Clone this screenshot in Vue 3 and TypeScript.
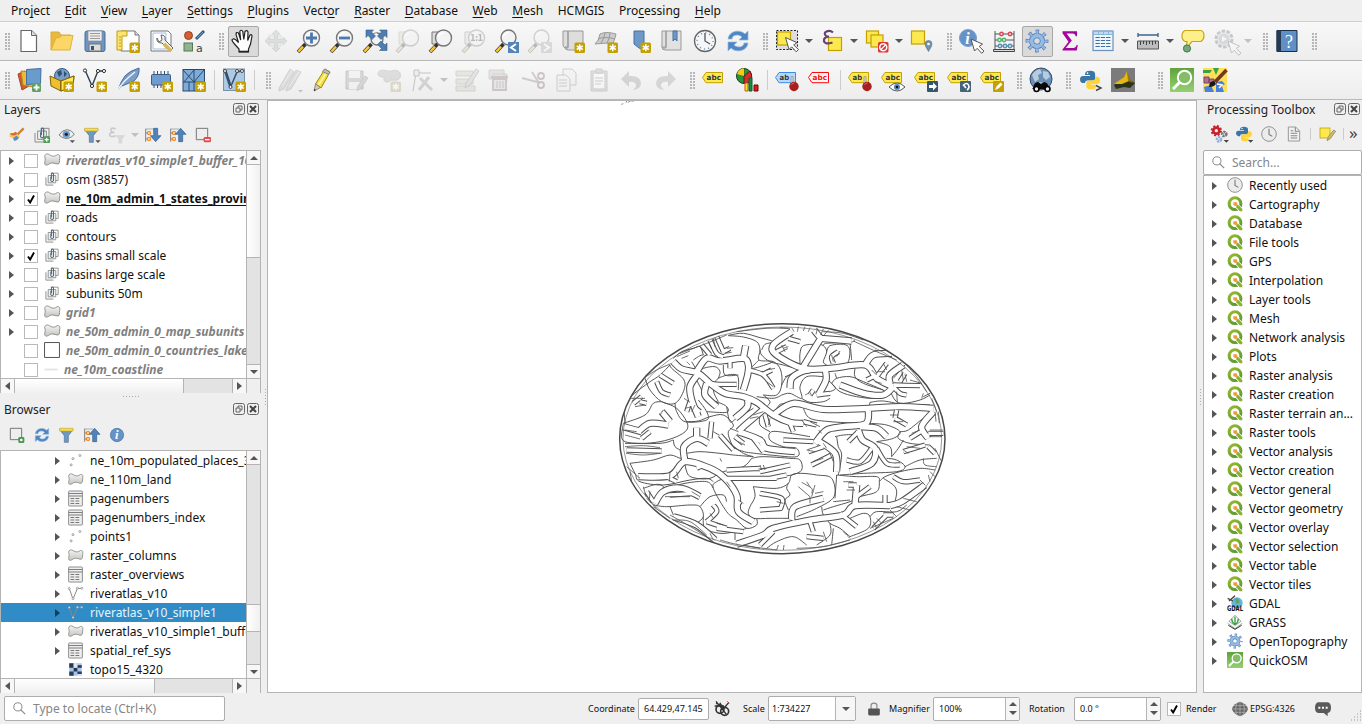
<script setup lang="ts">
type Item = { t: 'btn' | 'handle' | 'sep' | 'arrow' | 'space'; icon?: string; off?: boolean; on?: boolean; drop?: boolean }
type Row = { label: string; icon: string; arrow?: boolean; checked?: boolean; style?: string; selected?: boolean }

const badge =
  '<rect x="13.5" y="13.5" width="10.5" height="10.5" rx="1.5" fill="#c4a000"/><path d="M18.75 15.2v7.1M15.7 17l6.1 3.5M15.7 20.5l6.1-3.5" stroke="#fff" stroke-width="1.5"/>'
const lens =
  '<path d="M1 23l7.5-8" stroke="#333" stroke-width="3.6"/><path d="M1.4 22.6l4.6-5" stroke="#f5c832" stroke-width="2.4"/>'
const glass = (x = 14.5, y = 9, r = 8) =>
  `${lens}<circle cx="${x}" cy="${y}" r="${r}" fill="#f3f3f3" stroke="#777" stroke-width="1.4"/><path d="M${x - 5} ${y - 1}q1-4 5-4" fill="none" stroke="#fff" stroke-width="1.5"/>`
const tag = (fill: string, line: string, color: string, word: string) =>
  `<path d="M.5 9.5L4 4.5H20.5V14.7H4Z" fill="${fill}" stroke="${line}"/><text x="4.6" y="12.3" font-family="DejaVu Sans" font-weight="bold" font-size="7.4" textLength="${word.length * 4.8}" lengthAdjust="spacingAndGlyphs" fill="${color}">${word}</text>`
const yTag = (w = 'abc') => tag('#fce94f', '#c4a000', '#333', w)
const pin = '<path d="M17 8.500v8" stroke="#777" stroke-width="2.600"/><path d="M17 9v8" stroke="#ddd" stroke-width="1.4"/><circle cx="19" cy="18.500" r="4.7" fill="#a61e1e"/><path d="M16.500 17q1-2.500 3-2" stroke="#d66" fill="none"/>'
const refreshArt = '<path d="M2 10C3 1.500 14 0 19 5l3-3v9h-9l3-3C12 4.500 6 6 6 10Z" fill="#4f87c4" stroke="#8fb4dd" stroke-width=".7"/><path d="M22 14C21 22.500 10 24 5 19l-3 3v-9h9l-3 3c4 3.500 10 2 10-2Z" fill="#4f87c4" stroke="#8fb4dd" stroke-width=".7"/>'
const pythonArt = '<path d="M6 5q0-4 6-4t6 4v5q0 2.500-3 2.500H9Q6 12.500 6 15.500H3.500Q0 15 0 11t4-4h8V6H6Z" fill="#3a75a8"/><circle cx="9" cy="3.700" r="1" fill="#fff"/><path d="M18 8h3q3 1 3 4.500T20 17h-7v1h6v1.500q0 3.500-5.500 3.500T7.500 19.500V15q0-2.500 3-2.500H15q3 0 3-3Z" fill="#ffd43b"/>'
const layersClip = '<path d="M1.500 9v13.500h13M5.500 6v12.500h13V6Z" fill="#f1f1ee" stroke="#8a8a86" stroke-width="1.500"/><path d="M10 2h12.500v12.500H18" fill="none" stroke="#8a8a86" stroke-width="1.500"/><path d="M10 8v7q2 2.500 4.500 0V3q-2-2.500-3.500 0v9" fill="none" stroke="#45688e" stroke-width="1.800"/>'
const polygonArt = '<defs><linearGradient id="pg" x2="0" y2="1"><stop stop-color="#f4f4f2"/><stop offset="1" stop-color="#c4c4c1"/></linearGradient></defs><path d="M1 7C1 3 5 2 8 4C12 7 16 7 20 4C24 3 24 7 23.500 10C23 14 24 17 21 18C17 18 13 15 9 17C6 20 1 21 1 17C1 14 3 11 1 7Z" fill="url(#pg)" stroke="#92928f" stroke-width="1.500"/>'
const gearArt = '<g fill="none"><circle cx="12" cy="12" r="9.300" stroke="#4d7fbd" stroke-width="4.200" stroke-dasharray="3.300 4.005" stroke-dashoffset="1.600"/><circle cx="12" cy="12" r="5.400" stroke="#4d7fbd" stroke-width="5.200"/><circle cx="12" cy="12" r="9" stroke="#98bbe4" stroke-width="3.400" stroke-dasharray="2 5.069" stroke-dashoffset="1"/><circle cx="12" cy="12" r="5.400" stroke="#98bbe4" stroke-width="3.600"/></g>'
const sortArt = '<path d="M1 3v19M1 9h5M1 18h5" stroke="#777" stroke-width="1.400"/><path d="M4 7h4v4H4zM4 16h4v4H4z" fill="#fff0d0" stroke="#f57900" stroke-width="1.500"/><path d="M0 3h14" stroke="#888"/>'
const quickArt = '<defs><linearGradient id="qg" x2="0" y2="1"><stop stop-color="#5ea33b"/><stop offset="1" stop-color="#97cf74"/></linearGradient></defs><path d="M0 0h24v24H0z" fill="url(#qg)"/><circle cx="14.500" cy="9.500" r="6.700" fill="#85bc68" stroke="#fff" stroke-width="2"/><path d="M10 14l-7 7" stroke="#fff" stroke-width="3"/>'
const globeArt = '<circle cx="12" cy="11" r="11" fill="#6b8fb5" stroke="#334c68"/><path d="M3 7q3-5 8-6l2 4-4 2 1 4-4 3zM14 3l5 1 2 5-4 3-3-3zM10 14l6 1-2 5" fill="#b8cce0"/>'
const cross = '<path d="M12 1l4 4h-2.500v5.500H19V8l4 4-4 4v-2.500h-5.500V19H16l-4 4-4-4h2.500v-5.500H5V16l-4-4 4-4v2.500h5.500V5H8Z" fill="#9db3c9" stroke="#6f879e" stroke-width=".7"/>'
const sq = (x: number, y: number, s: number) => `<rect x="${x}" y="${y}" width="${s}" height="${s}" fill="#fce94f" stroke="#c4a000" stroke-width="1.200"/>`
const cursor = (x: number, y: number) => `<path transform="translate(${x} ${y})" d="M0 0l3.500 12 2.700-2.700 4.500 5 2.300-2.200-4.800-4.700 3.300-2.300Z" fill="#fff" stroke="#555"/>`
const paper = '<path d="M4 1.500h10.500l5 5V22.500H4Z" fill="#fff" stroke="#666" stroke-width="1.200"/><path d="M14.500 1.500v5h5" fill="#ddd" stroke="#666"/>'

const art: Record<string, string> = {
  doc: paper,
  open: '<path d="M1 21V3h8l2 3h10v4" fill="#e8b93c" stroke="#dcae38"/><path d="M1 21l5-12q4 0 6-2.500h11L20 21Z" fill="#fcd667" stroke="#e0b13b"/>',
  save: '<rect x="2" y="2" width="20" height="20.500" rx="2" fill="#6d96c4" stroke="#466d9b"/><path d="M5 2h14v10H5z" fill="#eee" stroke="#888" stroke-width=".7"/><path d="M7 4.500h10M7 7h10M7 9.500h10" stroke="#999"/><path d="M6 15h12v7H6z" fill="#ddd" stroke="#777"/><path d="M8 17h3v4H8z" fill="#35557d"/>',
  layout: '<path d="M5 2h14l4 4v16H5z" fill="#fff" stroke="#777"/><path d="M19 2v4h4" fill="#ddd" stroke="#777"/><path d="M1 2h10v5H6v14H1z" fill="#fce374" stroke="#c4a000"/><path d="M3 8h2M3 11h2M3 14h2M3 17h2" stroke="#c4a000"/>' + badge,
  manager: '<path d="M2 2h17l3 3v17H2z" fill="#fff" stroke="#777"/><path d="M4 4h13v16H4z" fill="none" stroke="#a7bee0"/><path d="M8 9q-1 5 5 5l8 8 3-3-8-8q1-5-4-5l1 5-3 2Z" fill="#eee" stroke="#666"/><path d="M15 15l7 7" stroke="#d7b65d" stroke-width="3.500"/>',
  style: '<circle cx="6.500" cy="6.500" r="4" fill="#d45f34" stroke="#98401e"/><path d="M14 10l8-8" stroke="#35587e" stroke-width="3"/><path d="M15 9l6-6" stroke="#7da3cc"/><rect x="2" y="14" width="8.500" height="8" fill="#8fb58e" stroke="#537a54"/><text x="14" y="22.500" font-family="DejaVu Sans" font-size="11" fill="#444">a</text>',
  hand: '<path d="M8 23v-3L3.500 15Q-.5 10.500 2 10q2-.5 5.500 3.500L5 5.500q0-3 2.500-1.500l2.200 7L8.800 2.500q1-2.500 3 0l1 8 1.200-8q2-2 3 .5l-.3 8.500 2.300-5.500q2-1 2 1L19.500 15 17.500 20v3Z" fill="#fff" stroke="#222" stroke-width="1.200"/><path d="M8 22.500h9.500" stroke="#222" stroke-width="1.600"/>',
  pansel: '<path d="M5 6h12v11H5z" fill="#e9dc83" stroke="#c6bb72"/>' + cross,
  zin: glass() + '<path d="M14.500 3.500v11M9 9h11" stroke="#4c78ad" stroke-width="2.800"/>',
  zout: glass() + '<path d="M9 9h11" stroke="#4c78ad" stroke-width="2.800"/>',
  zfull: glass(14, 10, 6) + '<path d="M3 1h7.500L8.500 3l4 4-3.500 3.500-4-4L3 8.500zM24 1h-7.500l2 2-4 4 3.500 3.500 4-4 2 2zM24 21.500h-7.500l2-2-4-4L18 12l4 4 2-2z" fill="#4e7daf" stroke="#365e8a" stroke-width=".6"/>',
  zsel: '<path d="M3 3h11v12H3z" fill="#e9dc83" stroke="#aaa064"/>' + glass(),
  zlayer: '<path d="M3 3h11v12H3z" fill="#ddd" stroke="#777"/>' + glass(),
  z11: '<path d="M3 3h11v12H3z" fill="#ddd" stroke="#777"/>' + glass() + '<text x="8" y="12" font-family="DejaVu Sans" font-weight="bold" font-size="8" fill="#333" textLength="13">1:1</text>',
  zlast: glass(13.5, 8.5, 7.5) + '<path d="M13 13h11v11H13z" fill="#5383b9"/><path d="M21 15l-5 3.500 5 3.500" fill="none" stroke="#fff" stroke-width="2"/>',
  znext: glass(13.5, 8.5, 7.5) + '<path d="M13 13h11v11H13z" fill="#8aa"/><path d="M16 15l5 3.500-5 3.500" fill="none" stroke="#fff" stroke-width="2"/>',
  newmap: '<path d="M2 2h5v17H4q-2-1-2-3zM7 2h15v19H7q-3 0-3-3h3z" fill="#ddd" stroke="#999"/>' + badge,
  view3d: '<path d="M1 15Q5 12 6 5q6-3 16 0-1 5-3 9-9 0-18 1Z" fill="#ccc" stroke="#999"/><path d="M4 10q7-3 17 0M11 4Q10 10 7 14M16 4q0 5-3 10" fill="none" stroke="#999"/>' + badge,
  bmnew: '<path d="M7 2h10v19l-5-2-5-4z" fill="#6e98c8" stroke="#46709f"/>' + badge,
  bmshow: '<path d="M2 2h4v17H3q-2-1-1-3zM6 2h15v19H5q-3 0-3-3h4z" fill="#e1e1e1" stroke="#999"/><path d="M13 2h4v10l-2-2-2 2z" fill="#6e98c8" stroke="#46709f"/>',
  clock: '<circle cx="12" cy="12" r="10.500" fill="#f5f6f7" stroke="#666" stroke-width="1.300"/><circle cx="12" cy="12" r="8" fill="none" stroke="#6f91b4" stroke-width="1.600" stroke-dasharray="1 3.189"/><path d="M12 4v8l5 3" fill="none" stroke="#555" stroke-width="1.300"/>',
  refresh: refreshArt,
  select: '<rect x="1.500" y="1.500" width="21" height="19" fill="#ddd" stroke="#222" stroke-dasharray="2 1.500"/>' + sq(2.5, 3, 13) + cursor(10.5, 8.5),
  selexp: sq(8.5, 8.5, 13) + '<path d="M13 3.500Q10 1 6.500 2.500T6.500 7.500L9 7.500Q3.500 8 4 12t8.500 1.500" fill="none" stroke="#674172" stroke-width="2.200"/>',
  desel: sq(1.5, 2, 12) + sq(6, 6, 12) + '<rect x="13" y="13" width="10.500" height="10.500" rx="1.500" fill="#e03434"/><circle cx="18.250" cy="18.250" r="3.500" fill="none" stroke="#fff" stroke-width="1.500"/><path d="M15.500 21l5.500-5.500" stroke="#fff" stroke-width="1.300"/>',
  selloc: sq(1.5, 2, 13) + '<path d="M18.500 22.500Q15 17 15 15a3.500 3.500 0 017 0q0 2-3.500 7.500Z" fill="#7392ac" stroke="#51738f" stroke-width=".6"/><circle cx="18.500" cy="15" r="1.300" fill="#fff"/>',
  info: '<circle cx="9" cy="9" r="8.500" fill="#6593c7" stroke="#779fcb"/><text x="6.300" y="14.500" font-family="Liberation Serif" font-weight="bold" font-style="italic" font-size="16" fill="#fff">i</text>' + cursor(12, 10),
  abacus: '<path d="M3 2v19M22 2v19M3 5h19M3 11h19M3 17h19" stroke="#555"/><path d="M1.500 20.500h21v2h-21z" fill="#ddd" stroke="#444"/><g fill="#eee" stroke-width="1.500"><g stroke="#d64550"><circle cx="9.500" cy="5" r="1.700"/><circle cx="18" cy="5" r="1.700"/></g><g stroke="#56b56b"><circle cx="7.500" cy="11" r="1.700"/><circle cx="12" cy="11" r="1.700"/></g><g stroke="#5591b9"><circle cx="8" cy="17" r="1.700"/><circle cx="13" cy="17" r="1.700"/><circle cx="18" cy="17" r="1.700"/></g></g>',
  gear: gearArt,
  sigma: '<path d="M4.500 3v-.8h14.500v5h-1.300q-.5-2.700-3.200-2.700H8.500l5.300 7L7.700 19h7.500q2.500 0 3.500-3h1.100l-1 5.500H4.500v-1L10.500 12.700 4.500 4.200Z" fill="#a3069c"/>',
  table: '<rect x="2" y="2" width="20" height="19.500" fill="#f0f5fb" stroke="#6991bd" stroke-width="1.200"/><path d="M2 2h20v4H2z" fill="#86b6dc"/><path d="M3 4h18" stroke="#fff" stroke-dasharray="4 1"/><path d="M4.500 8.500h15M4.500 11.500h15M4.500 14.500h15M4.500 17.500h15" stroke="#3c6fa5" stroke-width="1.200" stroke-dasharray="4.300 1"/>',
  measure: '<path d="M2 6h20M2 4v4M22 4v4" stroke="#3d6690" stroke-width="1.400"/><path d="M1.500 12h21v8h-21z" fill="#bdbdbd" stroke="#555"/><path d="M4.500 12v4M7.500 12v3M10.500 12v4M13.500 12v3M16.500 12v4M19.500 12v3" stroke="#444"/>',
  tip: '<path d="M4 1.500h16q3 1 3 5t-3 6H11l-6 7 1-7H4Q1 11 1 7t3-5.500Z" fill="#fdf08a" stroke="#c6a51c" stroke-width="1.200"/><circle cx="6" cy="19.500" r="3.600" fill="#73a87c" stroke="#46744d"/>',
  action: '<circle cx="10" cy="10" r="8" fill="#ddd" stroke="#666" stroke-width="3" stroke-dasharray="3.500 1.500"/><circle cx="10" cy="10" r="5.500" fill="#88a5bd"/><path d="M8 7l5 3-5 3z" fill="#fff"/>' + cursor(14, 12),
  help: '<path d="M2 1.500h20v21H2z" fill="#5f8fc4" stroke="#182f4a"/><path d="M1.500 1.500h4.500v21H1.500z" fill="#263a53"/><text x="10" y="18.500" font-family="Liberation Serif" font-size="18" fill="#fff">?</text>',
  data: '<path d="M1 6l7-3 4 15-7 4z" fill="#cf5d32" stroke="#a34621"/><path d="M4 3l12 1 1 15-11-2z" fill="#f0bb31" stroke="#b88918"/><path d="M9.500 1.500L24 .5l-.5 15-14 1z" fill="#699bcb" stroke="#42709f"/><rect x="15" y="15" width="9" height="9" rx="1.500" fill="#629f68"/><path d="M19.500 16.500v6M16.500 19.500h6" stroke="#fff" stroke-width="1.800"/>',
  geopkg: '<circle cx="12" cy="8" r="7.500" fill="#769dc8" stroke="#335c88"/><path d="M7 4l4-2 1 4-3 3zM14 3l3 3-3 3z" fill="#324f70"/><path d="M0 8l11 5v10L1 18zM24 8l-13 5v10l12-5z" fill="#efbf30" stroke="#816000"/><path d="M24 8l-13 5v10l12-5z" fill="#ffe85a" stroke="#816000"/>' + badge,
  vector: '<path d="M2 2l7 16 6-15h6" fill="none" stroke="#263e57" stroke-width="1.400"/><g fill="#fff" stroke="#333"><circle cx="2" cy="2.500" r="1.600"/><circle cx="9" cy="18" r="1.600"/><circle cx="15" cy="3" r="1.600"/><circle cx="21" cy="3" r="1.600"/></g>' + badge,
  feather: '<path d="M2 22Q5 13 9 8T23 0Q24 7 18 13L6 18" fill="#7a9ec8" stroke="#426d9e"/><path d="M1 23Q6 14 19 4" fill="none" stroke="#edf5fc" stroke-width="1.500"/>' + badge,
  chip: '<path d="M5 3v17M8.500 3v17M12 3v17M15.500 3v17M19 3v17" stroke="#36516e"/><rect x="2.500" y="6.500" width="19" height="10.500" rx="1" fill="#6f9bd0" stroke="#345d89"/>' + badge,
  mesh: '<rect x="1" y="1.500" width="21.500" height="21.500" fill="#7fabd9" stroke="#284a6e"/><path d="M1 14h21M12 1v22M1 2l11 12L22 2M12 2L2 14M7 14v9" fill="none" stroke="#284a6e"/>' + badge,
  virtual: '<rect x="1.500" y="1" width="21" height="21.500" fill="#aec9e3" stroke="#7790aa"/><path d="M4 3l5 15 6-14 5-1M3 4l5 15" fill="none" stroke="#35506b" stroke-width="1.500"/><g fill="#fff" stroke="#444"><circle cx="3" cy="3" r="1.500"/><circle cx="8.500" cy="19" r="1.500"/><circle cx="15" cy="3" r="1.500"/><circle cx="20" cy="3" r="1.500"/></g>' + badge,
  pencils: '<path d="M1 20L12 1l4 3L6 21l-5 2zM8 21L18 2l5 2-10 17-5 2z" fill="#b3aaa4" stroke="#8b8580"/><path d="M4 18L14 3M11 19L21 4" stroke="#ddd"/><path d="M20 22h5l-2.500 2.500z" fill="#555"/>',
  pencil: '<path d="M4.500 16L14 1l5 3L10 20Z" fill="#f3dd48" stroke="#9d8900"/><path d="M7.500 17L16.500 3" stroke="#fff89a" stroke-width="1.500"/><path d="M13.500 1l5.500 3-1.500 2.500-6-3z" fill="#bbb" stroke="#888"/><path d="M4.500 16L3 23l6.500-3.500z" fill="#dfc9a4" stroke="#777" stroke-width=".8"/><path d="M3.300 21L3 23l2-1z" fill="#222"/>',
  saveedit: '<path d="M2 3h17v18H2z" fill="#999" stroke="#666"/><path d="M5 3h11v7H5zM5 14h11v7H5z" fill="#eee"/><path d="M13 23l1-5 7-10 3 2-7 10z" fill="#b59090" stroke="#777"/>',
  addpoly: '<path d="M1 6C1 1 8 2 11 3S17 1 21 3 24 11 20 12 15 11 13 13 6 14 7 11 1 10 1 6Z" fill="#aaa" stroke="#888"/>' + badge,
  vertex: '<path d="M3 23L6 5h15" fill="none" stroke="#555"/><path d="M4 2h5v6H4z" fill="#ddd" stroke="#555"/><path d="M9 22l10-13M10 10l12 12" stroke="#888" stroke-width="3"/>',
  multi: '<path d="M1 3h17v5H1zM1 11h17v5H1zM1 18h19v5H1z" fill="#cbc69e" stroke="#918c65"/><path d="M10 20l1-5L21 1l3 2-9 14z" fill="#bbb" stroke="#777"/>',
  del: '<path d="M1 2h15v9H1zM5 6h14v8H5z" fill="#c5bea7" stroke="#888"/><path d="M3 9h17M5 11h13v11H5z" fill="#ccc" stroke="#a15b5b" stroke-width="1.800"/><path d="M9 13v7M12 13v7M15 13v7" stroke="#a15b5b"/>',
  cut: '<path d="M1 10l17 4.500M11 4l7 11" stroke="#777" stroke-width="2"/><circle cx="20" cy="8" r="3" fill="none" stroke="#9d4b4b" stroke-width="1.800"/><circle cx="20" cy="17" r="3" fill="none" stroke="#9d4b4b" stroke-width="1.800"/>',
  copy: '<path d="M9 1h9l4 4v12H9z" fill="#eee" stroke="#777"/><path d="M3 7h9l4 4v12H3z" fill="#eee" stroke="#777"/><path d="M5 12h8M5 15h8M5 18h8" stroke="#777"/>',
  paste: '<path d="M4 3h16v20H4z" fill="#bcbcb0" stroke="#777"/><path d="M6 5h12v16H6z" fill="#fff" stroke="#777"/><path d="M9 1h6v4H9z" fill="#aaa" stroke="#777"/><path d="M8 10h8M8 13h8M8 16h6" stroke="#777"/>',
  undo: '<path d="M9 3v5q11-1 12 7 0 6-8 7 5-4 2-7-2-2-6-1v5L1 11z" fill="#9d8888"/>',
  redo: '<path d="M15 3v5Q4 7 3 15q0 6 8 7-5-4-2-7 2-2 6-1v5l8-8z" fill="#8d9691"/>',
  tagY: yTag(),
  chart: '<circle cx="9" cy="8" r="7.500" fill="#23963d" stroke="#183f1d"/><path d="M9 8V.5A7.500 7.500 0 003 3.500Z" fill="#f2cc18" stroke="#5d5013"/><path d="M9 8V.5Q4 .5 2 6Z" fill="#f2cc18"/><path d="M9 8l6-5q4 7-1 11.500L9 15.500z" fill="#d92b2b" stroke="#6a1717"/><path d="M10 15h3v8h-3z" fill="#fce02a" stroke="#d05b00"/><path d="M14 10h3v13h-3z" fill="#198a43" stroke="#09602c"/><path d="M19 17h4v6h-4z" fill="#d71d1d" stroke="#750505"/>',
  tagB: tag('#b8d9fa', '#3c8be8', '#333', 'ab') + pin,
  tagR: tag('#fff4f4', '#fa0c0c', '#fa0c0c', 'abc'),
  tagPin: yTag('ab') + pin,
  tagEye: yTag() + '<path d="M8 19q8-8 16 0-8 8-16 0Z" fill="#fff" stroke="#555"/><circle cx="16" cy="19" r="3" fill="#4888bd"/><circle cx="16" cy="19" r="1.200" fill="#111"/>',
  tagMove: yTag() + '<rect x="13" y="13" width="11" height="11" rx="1" fill="#35576d"/><path d="M15 17h4v-2.500l4 4-4 4V20h-4z" fill="#fff"/>',
  tagRot: yTag() + '<rect x="13" y="13" width="11" height="11" rx="1" fill="#456478"/><path d="M20 22q3-2 1.500-5t-5 0l2.500 3" fill="none" stroke="#fff" stroke-width="1.600"/>',
  tagEdit: yTag() + '<rect x="13" y="13" width="11" height="11" rx="1" fill="#c4a000"/><path d="M15 22l1.500-3.500 4-4 2 2-4 4z" fill="#fff"/>',
  globe: globeArt + '<path d="M4 20q1-6 5-6l3 2 3-2q4 0 5 6l1 1H3z" fill="#090909"/><circle cx="7.500" cy="21" r="2.500" fill="#eee" stroke="#000" stroke-width="1.600"/><circle cx="18.500" cy="21" r="2.500" fill="#eee" stroke="#000" stroke-width="1.600"/>',
  python: '<g transform="translate(2 2) scale(.84)">' + pythonArt + '</g><path d="M18 17.500l5 2.500-5 2.500" fill="none" stroke="#444" stroke-width="1.400"/>',
  pyDrop: pythonArt + '<path d="M18 21h8l-4 4z" fill="#444"/>',
  plane: '<path d="M0 0h24v24H0z" fill="#7b7b7b"/><path d="M3 17L13 9l3-5 3 8 5 3-5 5-6-1-8 2z" fill="#2b3418"/><path d="M3 16l10-7 3-6 2 10-7 3z" fill="#e5b715"/><path d="M16 3l3 9 4 3-6-2z" fill="#a97a00"/>',
  quick: quickArt,
  paint: '<path d="M0 0h24v24H0z" fill="#ffe05b"/><path d="M0 2h9l-2 3H0zM10 0l3 7 3-7z" fill="#3ca044"/><path d="M1 9h5v6H1zM6 11h5v4H6z" fill="#b46d8d" stroke="#784766"/><path d="M1 19l7-2 3 7H2zM13 24V14l6-1 3 3-3 2 2 6z" fill="#4a80da"/><path d="M14 16l5 1-3 3M6 18l4-2" stroke="#fff" stroke-width="1.500" fill="none"/><path d="M12 14L23.500 2" stroke="#74381a" stroke-width="3.600"/><path d="M6 19q0-6 5-6l2 3q-2 3-7 3" fill="#181818"/>',
  brush: '<path d="M11 13L22 2" stroke="#c88637" stroke-width="3.500"/><path d="M1 9q5 1 8-2l7 7q-3 6-7 6Q5 15 1 15z" fill="#f4cb50"/><path d="M2 9q5 1 8-2l3 3q-5 4-10 2z" fill="#e75c44"/><path d="M6 17l5-4 4 3q-3 5-7 5z" fill="#5a8cc6"/>',
  addgroup: layersClip + '<rect x="14" y="14" width="10" height="10" rx="1" fill="#4e9d57"/><path d="M19 16v6M16 19h6" stroke="#fff" stroke-width="2"/>',
  eye: '<path d="M0 12Q5 4 12 4t11 7q-9 10-19 4Z" fill="#eee" stroke="#777" stroke-width="1.400"/><circle cx="11" cy="11" r="5.500" fill="#6d9fce"/><circle cx="11" cy="11" r="2.500" fill="#222"/><path d="M16 20h8l-4 4z" fill="#555"/>',
  filter: '<path d="M1 4h20l-7 9v10H8V13z" fill="#7198c1" stroke="#4d719a"/><path d="M1 2h20v4H1z" fill="#f5e34c" stroke="#c6a42c"/>',
  filterD: '<path d="M1 4h20l-7 9v10H8V13z" fill="#7198c1" stroke="#4d719a"/><path d="M1 2h20v4H1z" fill="#f5e34c" stroke="#c6a42c"/><path d="M17 20h8l-4 4z" fill="#555"/>',
  epsF: '<path d="M10 3Q3 0 3 4t5 4Q0 8 1 12t9 1" fill="none" stroke="#777" stroke-width="2.500"/><path d="M11 13h12l-4 5v6h-4v-6z" fill="#aaa" stroke="#888"/>',
  expand: sortArt + '<path d="M13 2h6v11h5l-8 9-8-9h5z" fill="#5182b8" stroke="#2f5f92"/>',
  collapse: sortArt + '<path d="M13 22h6V11h5l-8-9-8 9h5z" fill="#5182b8" stroke="#2f5f92"/>',
  remove: '<path d="M2 2h17v17H2z" fill="#eee" stroke="#777" stroke-width="1.500"/><rect x="13" y="15" width="11" height="8" rx="2" fill="#e64b4b"/><path d="M15 19h7" stroke="#fff" stroke-width="2"/>',
  addlayer: '<path d="M2 2h17v17H2z" fill="#eee" stroke="#777" stroke-width="1.500"/><rect x="14" y="15" width="9" height="9" rx="2" fill="#4e9557"/><circle cx="18.500" cy="19.500" r="2" fill="#fff"/>',
  infoS: '<circle cx="12" cy="12" r="10" fill="#6593c7" stroke="#40709f"/><text x="9" y="18.500" font-family="Liberation Serif" font-weight="bold" font-style="italic" font-size="19" fill="#fff">i</text>',
  gearsRed: '<circle cx="8" cy="7" r="4.500" fill="none" stroke="#c8232c" stroke-width="4"/><circle cx="8" cy="7" r="7" fill="none" stroke="#c8232c" stroke-width="3" stroke-dasharray="3 2.500"/><circle cx="20" cy="12" r="3" fill="none" stroke="#777" stroke-width="4" stroke-dasharray="2.800 1"/><circle cx="12" cy="20" r="3" fill="none" stroke="#8fb0dd" stroke-width="4" stroke-dasharray="2.800 1"/><path d="M19 21h8l-4 4z" fill="#444"/>',
  clockS: '<circle cx="12" cy="12" r="11" fill="#ececec" stroke="#8b8b8b" stroke-width="1.400"/><path d="M12 4v8.500l5 3" fill="none" stroke="#777" stroke-width="1.600"/>',
  docS: '<path d="M3.500 1.500h11l6 6v15h-17Z" fill="#f1f1f1" stroke="#999" stroke-width="1.500"/><path d="M14 2v6h6M7 11h10M7 14.500h10M7 18h10M7 7h4" fill="none" stroke="#888" stroke-width="1.600"/>',
  edit: sq(1.5, 3, 15) + '<path d="M12 22l2-6 8-10 3 2-8 11z" fill="#d5bb55" stroke="#777"/>',
  poly: polygonArt,
  group: layersClip,
  sheet: '<rect x="1" y="0" width="22" height="24" rx="1" fill="#eee" stroke="#888" stroke-width="1.500"/><path d="M1 4h22M1 8h22" stroke="#777" stroke-width="1.500"/><path d="M4 12h16M4 16h16M4 20h16" stroke="#777" stroke-width="1.700" stroke-dasharray="6 2"/>',
  points: '<g fill="none" stroke="#999" stroke-width="1.500"><circle cx="5" cy="19" r="1.600"/><circle cx="8" cy="9" r="1.600"/><circle cx="19" cy="4" r="1.600"/></g>',
  line: '<path d="M2 4l6 17 7-17h7" fill="none" stroke="#888" stroke-width="1.600"/><g fill="#eee" stroke="#888"><circle cx="2" cy="4" r="1.700"/><circle cx="8" cy="20" r="1.700"/><circle cx="15" cy="3.500" r="1.700"/><circle cx="22" cy="3.500" r="1.700"/></g>',
  raster: '<path d="M2 2h20v20H2z" fill="#a9c4e8"/><path d="M2 2h7v7H2zM9 9h6v6H9zM15 5h7v4h-7z" fill="#26374f"/><path d="M2 15h7v7H2zM15 15h7v4h-7z" fill="#263f5f"/><path d="M9 2h6v7H9zM15 19h7v3h-7z" fill="#dbe7f5"/>',
  box: '<path d="M.8.8h22.400v22.400H.8z" fill="#fff" stroke="#555" stroke-width="1.500"/>',
  dash: '<path d="M0 12h21" stroke="#e4e4e4" stroke-width="3"/>',
  qgis: '<defs><linearGradient id="qr" x2=".6" y2="1"><stop stop-color="#9cb92b"/><stop offset="1" stop-color="#5b9a35"/></linearGradient></defs><circle cx="12" cy="11.500" r="8.800" fill="#fff" stroke="url(#qr)" stroke-width="4.600"/><path d="M12 12l11 11" stroke="#fff" stroke-width="7"/><path d="M14 14l3-.5 6 6V23h-4l-5-6Z" fill="#8bb02f"/><path d="M9.500 9.500h5l1.500 3.500-3 2.500-3.500-2Z" fill="#f39a3c"/>',
  gdal: '<circle cx="15" cy="12" r="8.500" fill="#62b6d9"/><path d="M12 5l5 1 2 5-5 3z" fill="#64a65d"/><path d="M1 5l8 4M3 9L12 1" stroke="#444" stroke-width="2"/><text x="0" y="23.500" font-family="DejaVu Sans" font-weight="bold" font-size="11.500" textLength="24" lengthAdjust="spacingAndGlyphs" fill="#111">GDAL</text>',
  grass: '<path d="M1 14l11 8 11-8M3 11l9 6 9-6-9-9z" fill="#f7f7f7" stroke="#888" stroke-width="1.200"/><path d="M12 16V4M12 16Q7 12 7 7M12 16q5-4 5-9" fill="none" stroke="#35a540" stroke-width="2"/><path d="M2 17l10 6 10-6" fill="none" stroke="#333" stroke-width="1.500"/>',
  target: '<circle cx="9" cy="14" r="6" fill="#eee" stroke="#333" stroke-width="2.500"/><circle cx="16" cy="17" r="6" fill="none" stroke="#333" stroke-width="2.500"/><path d="M3 2l16 20M9 4l5 12M1 9h14M15 12l7-8M3 5l9 3" fill="none" stroke="#333" stroke-width="2"/><path d="M20 2l3 3" stroke="#a44" stroke-width="1.500"/>',
  lock: '<path d="M7 12V6q0-4 5-4t5 4v6" fill="none" stroke="#888" stroke-width="2"/><rect x="2" y="11" width="20" height="12" rx="2" fill="#555"/>',
  crs: '<path d="M12 1Q22 4 24 12 22 20 12 23 2 20 0 12 2 4 12 1Z" fill="#666"/><path d="M1 12h22M3 7h18M3 17h18M12 1v22M8 2q-5 10 0 20M16 2q5 10 0 20" fill="none" stroke="#ccc" stroke-width=".8"/>',
  bubble: '<path d="M5 2h14q5 1 5 8t-5 8v5l-6-5H5q-5-1-5-8t5-8Z" fill="#5a5a5a"/><path d="M5 10h3M10.500 10h3M16 10h3" stroke="#fff" stroke-width="3"/>',
  search: '<circle cx="9" cy="9" r="7.500" fill="none" stroke="#888" stroke-width="1.800"/><path d="M14 14l8.500 8.500" stroke="#888" stroke-width="2.200"/>',
}

const menus: [string, string, string][] = [
  ['Pro', 'j', 'ect'], ['', 'E', 'dit'], ['', 'V', 'iew'], ['', 'L', 'ayer'], ['', 'S', 'ettings'], ['', 'P', 'lugins'], ['Vect', 'o', 'r'],
  ['', 'R', 'aster'], ['', 'D', 'atabase'], ['', 'W', 'eb'], ['', 'M', 'esh'], ['HCMGIS', '', ''], ['Pro', 'c', 'essing'], ['', 'H', 'elp'],
]

/* Compact toolbar notation: | handle, / separator, v arrow, v- disabled arrow, _ spacer, trailing - disabled, trailing + pressed */
function bar(spec: string): Item[] {
  return spec.split(' ').map((s): Item => {
    const off = s.endsWith('-')
    const on = s.endsWith('+')
    const k = off || on ? s.slice(0, -1) : s
    if (k === '|') return { t: 'handle' }
    if (k === '/') return { t: 'sep' }
    if (k === '_') return { t: 'space' }
    if (k === 'v') return { t: 'arrow', off }
    return { t: 'btn', icon: k, off, on }
  })
}
const bars: Item[][] = [
  bar('| doc open save layout manager style | hand+ pansel- zin zout zfull zsel- zlayer z11- zlast znext- newmap view3d bmnew bmshow clock refresh | select v selexp v desel v selloc | info abacus gear+ sigma table v measure v tip action- v- | help |'),
  bar('| data geopkg vector feather chip mesh / virtual / | pencils- pencil saveedit- addpoly- vertex- v- multi- del- cut- copy- paste- undo- redo- | tagY chart / tagB tagR / tagPin tagEye tagMove tagRot tagEdit | globe | python plane _ | quick paint'),
]

const layerTools = bar('brush addgroup eye filterD epsF- v- expand collapse remove')
const browserTools = bar('addlayer refresh filter collapse infoS')
const procTools = bar('gearsRed pyDrop clockS docS / edit /')

const layers: Row[] = [
  { label: 'riveratlas_v10_simple1_buffer_10', icon: 'poly', arrow: true, style: 'dim' },
  { label: 'osm (3857)', icon: 'group', arrow: true },
  { label: 'ne_10m_admin_1_states_provinces', icon: 'poly', arrow: true, checked: true, style: 'current' },
  { label: 'roads', icon: 'group', arrow: true },
  { label: 'contours', icon: 'group', arrow: true },
  { label: 'basins small scale', icon: 'group', arrow: true, checked: true },
  { label: 'basins large scale', icon: 'group', arrow: true },
  { label: 'subunits 50m', icon: 'group', arrow: true },
  { label: 'grid1', icon: 'poly', arrow: true, style: 'dim' },
  { label: 'ne_50m_admin_0_map_subunits', icon: 'poly', arrow: true, style: 'dim' },
  { label: 'ne_50m_admin_0_countries_lakes', icon: 'box', style: 'dim' },
  { label: 'ne_10m_coastline', icon: 'dash', style: 'dim' },
]
const browser: Row[] = [
  { label: 'ne_10m_populated_places_3', icon: 'points', arrow: true },
  { label: 'ne_110m_land', icon: 'poly', arrow: true },
  { label: 'pagenumbers', icon: 'sheet', arrow: true },
  { label: 'pagenumbers_index', icon: 'sheet', arrow: true },
  { label: 'points1', icon: 'points', arrow: true },
  { label: 'raster_columns', icon: 'poly', arrow: true },
  { label: 'raster_overviews', icon: 'sheet', arrow: true },
  { label: 'riveratlas_v10', icon: 'line', arrow: true },
  { label: 'riveratlas_v10_simple1', icon: 'line', arrow: true, selected: true },
  { label: 'riveratlas_v10_simple1_buffer', icon: 'poly', arrow: true },
  { label: 'spatial_ref_sys', icon: 'sheet', arrow: true },
  { label: 'topo15_4320', icon: 'raster' },
]
const tools: Row[] = [
  { label: 'Recently used', icon: 'clockS' },
  ...['Cartography', 'Database', 'File tools', 'GPS', 'Interpolation', 'Layer tools', 'Mesh', 'Network analysis', 'Plots', 'Raster analysis', 'Raster creation', 'Raster terrain an...', 'Raster tools', 'Vector analysis', 'Vector creation', 'Vector general', 'Vector geometry', 'Vector overlay', 'Vector selection', 'Vector table', 'Vector tiles'].map((label) => ({ label, icon: 'qgis' })),
  { label: 'GDAL', icon: 'gdal' },
  { label: 'GRASS', icon: 'grass' },
  { label: 'OpenTopography', icon: 'gear' },
  { label: 'QuickOSM', icon: 'quick' },
]

/* Smooths a run of "x,y" pairs into cubic segments */
function curve(run: string): string {
  const p = run.trim().split(/\s+/).map((s) => s.split(',').map(Number))
  let d = `M${p[0][0]} ${p[0][1]}`
  for (let i = 0; i < p.length - 1; i++) {
    const a = p[Math.max(0, i - 1)], b = p[i], c = p[i + 1], e = p[Math.min(p.length - 1, i + 2)]
    const k = 6
    d += `C${(b[0] + (c[0] - a[0]) / k).toFixed(1)} ${(b[1] + (c[1] - a[1]) / k).toFixed(1)} ${(c[0] - (e[0] - b[0]) / k).toFixed(1)} ${(c[1] - (e[1] - b[1]) / k).toFixed(1)} ${c[0]} ${c[1]}`
  }
  return d
}
const toPath = (runs: string) => runs.split(';').map(curve).join('')

const basins = toPath(
  `355,62 400,66 440,80 450,105 447,135 490,140 512,165 515,210 500,240 460,240 ; 447,135 425,160 465,150 490,140 ; 455,105 465,88 490,80 450,68 400,55 360,60 355,62 ;
  450,105 455,120 480,140 520,150 575,165 ; 570,145 570,115 580,92 620,88 640,92 650,110 640,140 650,150 ; 650,110 660,92 700,88 718,100 718,130 710,150 ; 640,92 650,85 720,82 735,75 ;
  720,82 725,135 ; 735,160 735,185 760,205 820,225 ; 525,185 575,170 ; 515,210 530,185 555,172 ; 515,240 540,235 575,250 570,215 590,185 640,185 ; 575,250 600,262 640,260 660,250 ;
  665,205 680,190 720,185 760,200 835,235 800,250 740,245 690,230 665,205 ; 835,215 855,255 880,265 930,255 960,240 ; 675,175 680,190 ; 640,185 670,210 672,225 620,240 ;
  780,262 820,258 880,270 ; 780,262 775,285 ; 120,200 150,180 180,150 ; 105,190 120,225 155,260 195,265 220,230 222,195 185,160 180,150 ;
  155,260 130,265 105,300 40,325 ; 40,325 38,375 90,385 150,380 200,365 230,345 230,320 200,280 155,260 ; 195,265 200,290 225,320 290,315 290,290 265,255 ;
  290,290 350,292 350,275 325,262 290,250 270,215 250,175 ; 325,260 310,225 325,190 380,180 385,225 ; 325,190 330,170 315,155 280,160 255,175 ; 350,275 360,320 380,310 430,280 ;
  230,320 265,318 300,305 340,300 370,330 355,350 360,375 375,400 410,412 ; 375,400 350,375 310,350 ; 190,375 195,395 215,410 213,430 180,420 130,435 60,445 ; 190,375 150,385 45,385 ;
  230,415 270,410 330,415 370,420 430,425 ; 60,445 75,475 90,500 160,510 240,495 290,490 310,500 ; 225,450 235,480 260,490 300,490 340,470 400,455 425,430 ; 425,430 460,425 540,430 570,435 575,465 545,480 500,485 ;
  430,425 400,415 360,385 ; 410,412 480,420 560,425 560,400 520,395 480,375 485,350 540,355 600,365 ; 430,515 500,520 535,505 545,480 575,475 620,480 665,490 672,545 620,580 560,605 ; 535,505 530,520 540,540 525,555 535,585 ;
  430,515 435,545 420,575 415,595 430,610 480,610 535,610 ; 345,490 320,500 310,520 350,590 380,615 410,640 440,630 440,610 ; 270,575 300,545 340,540 350,560 ; 310,520 290,500 225,505 155,525 ;
  100,520 140,508 160,515 150,535 135,555 ; 130,570 170,575 240,570 270,575 280,605 260,625 ; 190,600 180,575 ; 280,605 285,640 330,655 375,650 410,640 ; 375,650 375,675 ;
  680,480 740,485 800,485 808,500 800,530 750,545 720,560 670,575 640,585 ; 680,480 675,550 ; 670,560 720,555 ; 808,500 825,485 870,470 930,460 975,465 ; 820,490 850,510 860,530 855,560 ;
  675,365 700,360 740,358 ; 680,365 685,395 695,420 685,480 ; 690,480 760,475 860,470 885,455 860,435 830,430 ; 800,380 840,395 845,425 ; 800,380 850,370 870,350 830,330 775,325 ; 870,350 895,345 940,310 965,300 ;
  870,350 865,370 900,385 960,390 ; 845,425 865,400 880,375 ; 580,280 600,310 660,320 740,325 770,330 ; 450,300 450,330 480,350 ; 515,240 490,250 440,245 ; 460,240 480,260 470,275 ;
  635,575 640,600 660,625 690,640 720,665 ; 660,625 660,660 620,690 ; 470,700 500,680 550,665 590,690 ; 720,610 760,595 780,605 775,640 720,665 ; 670,640 665,690 ; 780,605 800,590 860,590 890,570 ; 940,245 960,235 ;
  190,130 215,110 250,100 270,95 280,120 ; 245,140 260,165 ; 340,150 345,180 385,180 ; 850,190 885,150 ; 880,270 960,270 ; 885,455 930,435 980,430 ; 45,330 50,260 120,200 ;
  250,135 270,122 280,120 ; 840,75 830,115 795,105`,
)
const wide = toPath(
  `190,140 215,162 265,175 300,205 345,235 400,245 440,262 490,300 540,322 580,325 ; 262,180 240,215 245,255 265,305 ; 260,170 290,130 330,138 400,130 415,150 413,180 400,225 ; 400,130 407,92 ;
  545,50 490,90 500,120 580,160 660,160 765,150 800,190 848,215 ; 580,155 632,70 ; 632,70 612,45 ; 632,70 725,78 ; 765,150 790,120 845,115 ; 645,160 648,195 625,240 ; 540,220 545,190 575,170 600,165 ;
  490,300 550,265 640,283 775,280 870,275 970,280 ; 775,280 768,325 700,335 650,345 615,385 ; 750,335 800,340 830,365 ; 745,345 758,375 795,400 785,445 720,470 ; 620,375 675,415 680,470 ;
  970,290 935,335 955,370 ; 410,245 412,275 375,310 ; 465,280 400,335 385,350 ; 385,350 450,375 470,400 555,410 ; 85,485 180,482 225,440 300,460 345,490 380,540 385,590 430,620 ;
  225,440 222,395 260,370 295,385 ; 260,370 260,338 ; 380,688 460,660 490,640 600,615 700,600 735,572 840,572 ; 735,570 740,510 ; 545,615 555,575 640,550 ; 40,335 95,350 ;
  85,350 120,325 175,330 ; 155,290 180,320 ; 135,565 160,530 215,520 270,545 ; 190,605 260,630 315,675 ; 290,205 285,240 320,275 ; 840,572 875,560 945,510 ; 840,205 840,180 880,150 ; 690,210 760,235 820,240 850,215`,
)
const thin = toPath(
  `300,205 330,208 380,208 ; 360,130 360,160 ; 415,165 460,180 490,220 ; 455,180 485,165 ; 340,110 360,100 ; 340,110 320,65 ; 300,75 320,115 340,125 ; 275,90 300,120 ; 535,70 570,80 ; 500,110 530,95 ;
  670,145 665,125 685,110 ; 800,185 830,145 ; 850,215 870,235 890,240 ; 870,200 885,175 ; 770,195 800,180 ; 930,212 850,210 ; 600,240 610,225 ; 620,240 660,235 ; 855,310 860,285 ; 855,310 890,330 ;
  520,375 610,380 ; 595,410 640,395 ; 605,450 665,420 ; 715,380 745,350 ; 710,435 750,440 785,400 ; 800,400 830,445 870,450 ; 620,330 580,320 ; 540,325 550,350 ; 475,335 465,300 ; 375,365 400,385 ; 430,370 460,410 ;
  940,345 900,370 ; 955,395 975,415 ; 945,390 880,410 ; 955,355 1000,355 ; 120,350 95,370 ; 50,405 155,408 ; 170,485 200,500 ; 260,460 280,450 ; 350,465 450,460 ; 450,470 540,450 ; 480,490 530,480 ; 345,490 420,490 500,490 ;
  300,370 305,320 ; 330,360 370,405 ; 450,535 515,550 510,585 ; 450,585 515,580 ; 740,510 715,510 ; 740,545 780,515 ; 590,665 640,670 ; 600,620 610,650 ; 690,595 740,635 ;
  825,570 825,540 ; 850,485 880,500 930,495 ; 790,640 830,600 ; 850,600 820,600 ; 380,575 390,560 ; 180,540 260,535 ; 290,620 320,590 310,570 ; 290,620 350,640 ; 150,180 190,205 ; 140,200 155,230 180,240 ; 240,260 230,290 ; 110,530 130,560 ; 90,260 110,265 ; 70,265 95,245 ; 240,265 270,290 ; 450,690 490,650 ; 320,640 400,650`,
)
/* Short single strokes: headwater twigs and slivers along the rim */
const twigs = toPath(
  `565,515 600,545 ; 575,502 605,520 605,535 ; 605,545 615,510 ; 590,500 600,515 ; 615,535 640,530 ; 600,545 600,565 ; 450,450 455,465 ; 460,450 465,465 ; 445,462 470,460 ; 585,240 595,235 ; 600,232 605,242 ; 500,280 510,268 525,265 ;
  222,250 240,262 ; 225,280 245,275 ; 245,290 255,270 ; 60,250 105,250 ; 75,275 105,270 ; 150,300 160,285 ; 545,38 552,50 ; 565,35 562,50 ; 585,35 580,48 ; 600,38 595,50 ; 622,42 618,58 ; 640,42 632,60 ; 655,46 640,62 ; 510,38 535,40 ;
  380,50 470,40 540,40 ; 640,50 700,55 760,75 ; 730,78 800,110 860,135 ; 210,115 290,85 350,60 ; 200,125 240,108 ; 215,130 235,122 ; 100,190 140,165 185,145 ; 880,140 920,185 950,230 ; 900,195 935,205 ; 875,165 880,195 ; 885,178 890,200 ; 860,230 862,265 ;
  940,235 935,250 ; 965,250 980,290 ; 975,290 978,320 ; 985,290 988,325 ; 960,345 998,345 ; 958,365 996,365 ; 975,400 995,440 ; 940,430 945,450 980,455 ; 960,470 975,485 ; 930,495 945,510 ; 955,480 960,500 ; 880,550 920,560 ; 860,575 900,585 ; 840,585 860,605 ;
  50,455 90,490 ; 60,470 65,500 ; 100,515 108,545 ; 120,530 118,555 ; 110,550 140,580 ; 130,575 180,610 ; 180,600 250,640 310,680 ; 190,615 240,620 290,660 ; 300,655 310,675 ; 330,675 390,690 500,705 ; 400,690 450,700 ; 500,705 505,690 ; 520,705 522,690 ; 560,700 640,695 720,675 ;
  640,650 650,680 ; 700,650 720,670 ; 780,640 850,610 ; 800,610 815,625 ; 790,620 800,640 ; 700,500 730,500 ; 710,525 735,525 ; 360,340 385,350 ; 385,380 405,390 ; 430,300 460,290 ; 420,310 445,305 ; 480,310 475,330 ; 600,320 630,335 ; 575,315 590,335 ; 625,345 635,355 ;
  840,300 865,300 ; 850,320 880,320 ; 905,355 930,345 ; 880,405 895,415 ; 890,395 930,400 ; 590,405 615,410 ; 610,440 640,430 ; 660,415 670,440 ; 640,385 650,400 ; 45,345 80,350 ; 45,360 90,372 ; 45,395 100,392 150,398 ; 48,415 100,420 150,415 ; 330,430 335,440 ; 200,470 205,490 ; 180,470 178,500 ;
  350,500 360,515 ; 245,530 270,545 ; 165,545 240,545 ; 385,555 400,565 ; 500,560 520,565 ; 300,595 310,610 ; 320,625 340,630 ; 470,165 495,160 ; 470,200 490,215 ; 350,100 370,98 ; 345,115 365,112 ; 310,70 315,95 ; 295,80 305,100 ; 230,140 240,150 ; 520,100 535,95 ; 515,90 525,110 ; 665,120 670,140 ; 690,108 680,125 ;
  785,165 800,180 ; 795,200 815,205 ; 820,145 830,165 ; 805,170 825,170`,
)
</script>

<template>
  <div class="window">
    <nav class="menu">
      <span v-for="m in menus" :key="m.join('')">{{ m[0] }}<u>{{ m[1] }}</u>{{ m[2] }}</span>
    </nav>
    <div v-for="(b, n) in bars" :key="n" class="bar">
      <div v-for="(it, i) in b" :key="i" :class="['it', it.t, { off: it.off, on: it.on }]">
        <svg v-if="it.icon" viewBox="0 0 24 24" v-html="art[it.icon]" />
      </div>
    </div>

    <main>
      <aside class="left">
        <section class="dock layers">
          <header>Layers<i class="float"><svg viewBox="0 0 12 12"><rect x=".5" y=".5" width="11" height="11" rx="2" /><path d="M5 5V3h4v4H7M3 5h4v4H3z" /></svg></i><i><svg viewBox="0 0 12 12"><rect x=".5" y=".5" width="11" height="11" rx="2" /><path class="x" d="M3 3l6 6M9 3L3 9" /></svg></i></header>
          <div class="tools">
            <div v-for="(it, i) in layerTools" :key="i" :class="['it', it.t, { off: it.off }]"><svg v-if="it.icon" viewBox="0 0 24 24" v-html="art[it.icon]" /></div>
          </div>
          <div class="view">
            <div class="rows">
              <div v-for="r in layers" :key="r.label" :class="['row', r.style]">
                <b :class="['tri', { none: !r.arrow }]" />
                <span class="check"><svg v-if="r.checked" viewBox="0 0 14 14"><path d="M3.500 7.500l2.500 3.500 4.500-8" /></svg></span>
                <svg :class="['ic', r.icon]" viewBox="0 0 24 24" v-html="art[r.icon]" />
                <span class="label">{{ r.label }}</span>
              </div>
            </div>
            <div class="vs"><i class="up" /><div class="track"><div class="thumb" /></div><i class="down" /></div>
            <div class="hs"><i class="lt" /><div class="track"><div class="thumb" /></div><i class="rt" /></div>
            <div class="corner" />
          </div>
        </section>
        <div class="split"><i v-for="n in 6" :key="n" /></div>
        <section class="dock browser">
          <header>Browser<i class="float"><svg viewBox="0 0 12 12"><rect x=".5" y=".5" width="11" height="11" rx="2" /><path d="M5 5V3h4v4H7M3 5h4v4H3z" /></svg></i><i><svg viewBox="0 0 12 12"><rect x=".5" y=".5" width="11" height="11" rx="2" /><path class="x" d="M3 3l6 6M9 3L3 9" /></svg></i></header>
          <div class="tools">
            <div v-for="(it, i) in browserTools" :key="i" class="it btn"><svg viewBox="0 0 24 24" v-html="art[it.icon ?? '']" /></div>
          </div>
          <div class="view">
            <div class="rows">
              <div v-for="r in browser" :key="r.label" :class="['row', { sel: r.selected }]">
                <b :class="['tri', { none: !r.arrow }]" />
                <svg class="ic" viewBox="0 0 24 24" v-html="art[r.icon]" />
                <span class="label">{{ r.label }}</span>
              </div>
            </div>
            <div class="vs"><i class="up" /><div class="track"><div class="thumb" /></div><i class="down" /></div>
            <div class="hs"><i class="lt" /><div class="track"><div class="thumb" /></div><i class="rt" /></div>
            <div class="corner" />
          </div>
        </section>
      </aside>
      <div class="gutter"><i v-for="n in 6" :key="n" /></div>
      <div class="canvas">
        <svg viewBox="0 0 2787 1773">
          <path d="M1060 10l6-2m8-3l2-5m3 4l8-3m4 0l8-2" fill="none" stroke="#777" stroke-width="2.500" />
          <g transform="translate(1026 642)" fill="none" stroke="#505050" stroke-width="2.900">
            <clipPath id="lens"><ellipse cx="517" cy="371" rx="487" ry="344" /></clipPath>
            <g clip-path="url(#lens)">
              <path :d="basins" />
              <path :d="thin" stroke-width="16" />
              <path :d="wide" stroke-width="22" />
              <path :d="thin" stroke="#fff" stroke-width="10" />
              <path :d="wide" stroke="#fff" stroke-width="16" />
              <path :d="twigs" stroke-width="2.500" />
              <ellipse cx="517" cy="371" rx="478" ry="335" stroke-width="1.800" />
            </g>
            <ellipse cx="517" cy="371" rx="488" ry="345" stroke="#484848" stroke-width="4.500" />
          </g>
        </svg>
      </div>
      <div class="gutter right-g"><i v-for="n in 6" :key="n" /></div>
      <aside class="right">
        <header>Processing Toolbox<i class="float"><svg viewBox="0 0 12 12"><rect x=".5" y=".5" width="11" height="11" rx="2" /><path d="M5 5V3h4v4H7M3 5h4v4H3z" /></svg></i><i><svg viewBox="0 0 12 12"><rect x=".5" y=".5" width="11" height="11" rx="2" /><path class="x" d="M3 3l6 6M9 3L3 9" /></svg></i></header>
        <div class="tools">
          <div v-for="(it, i) in procTools" :key="i" :class="['it', it.t]"><svg v-if="it.icon" viewBox="0 0 24 24" v-html="art[it.icon]" /></div>
          <span class="more">»</span>
        </div>
        <div class="find"><svg viewBox="0 0 24 24" v-html="art.search" />Search...</div>
        <div class="list">
          <div v-for="r in tools" :key="r.label" class="row">
            <b class="tri" /><svg class="ic" viewBox="0 0 24 24" v-html="art[r.icon]" /><span class="label">{{ r.label }}</span>
          </div>
        </div>
      </aside>
    </main>

    <footer>
      <div class="locate"><svg viewBox="0 0 24 24" v-html="art.search" />Type to locate (Ctrl+K)</div>
      <span class="coord">Coordinate</span>
      <div class="field f1">64.429,47.145</div>
      <svg class="s-ic target" viewBox="0 0 24 24" v-html="art.target" />
      <span class="scale">Scale</span>
      <div class="field f2">1:734227<em><i class="down" /></em></div>
      <svg class="s-ic lock" viewBox="0 0 24 24" v-html="art.lock" />
      <span class="mag">Magnifier</span>
      <div class="field f3">100%<em><i class="up" /><i class="down" /></em></div>
      <span class="rot">Rotation</span>
      <div class="field f4">0.0 °<em><i class="up" /><i class="down" /></em></div>
      <span class="check"><svg viewBox="0 0 14 14"><path d="M3.500 7.500l2.500 3.500 4.500-8" /></svg></span>
      <span class="render">Render</span>
      <svg class="s-ic crs" viewBox="0 0 24 24" v-html="art.crs" />
      <span class="epsg">EPSG:4326</span>
      <svg class="s-ic bubble" viewBox="0 0 24 24" v-html="art.bubble" />
      <svg class="grip" viewBox="0 0 12 12"><path d="M10 1h1M7 4h1m2 0h1M4 7h1m2 0h1m2 0h1M1 10h1m2 0h1m2 0h1m2 0h1" stroke="#999" /></svg>
    </footer>
  </div>
</template>

<style>
body { margin: 0; background: #efefef; overflow: hidden; }
</style>

<style scoped>
* { box-sizing: border-box; }
.window { width: 1362px; height: 724px; display: flex; flex-direction: column; overflow: hidden; background: #efefef; font: 12px/19px "Noto Sans", sans-serif; color: #111; }
svg { display: block; overflow: visible; flex: none; }
i, em { font-style: normal; }
.menu { display: flex; flex: none; height: 22px; padding: 1px 0 0 3.7px; border-bottom: 1px solid #d0d0d0; }
.menu span { padding: 0 7.3px; white-space: pre; }
.menu u { text-underline-offset: 2px; text-decoration-skip-ink: none; }
.bar { display: flex; flex: none; align-items: center; height: 39px; border-bottom: 1px solid #b8b8b8; background: linear-gradient(#f8f8f8, #ededed); }
.bar .it { position: relative; flex: none; display: flex; align-items: center; justify-content: center; height: 31px; }
.bar .btn { width: 33px; }
.bar .btn svg { width: 24px; height: 24px; }
.bar .handle { width: 16px; }
.bar .handle:first-child { width: 12.5px; }
.bar .handle::before { content: ""; width: 5px; height: 17px; margin-left: 5px; background: radial-gradient(circle at 1px 1px, #b4b4b4 .7px, transparent .9px) 0 0 / 3px 3px; }
.bar .handle:first-child::before { margin-left: 2px; }
.bar .sep { width: 7px; }
.bar .sep::before { content: ""; width: 1px; height: 20px; background: #ccc; }
.bar .space { width: 10px; }
.bar .arrow { width: 12px; padding-right: 2px; }
.arrow::before { content: ""; border: 4px solid transparent; border-top-color: #555; border-bottom: 0; }
.bar .btn.on::before { content: ""; position: absolute; inset: 0 1px; border: 1px solid #a8a8a8; border-radius: 2px; background: #dadada; }
.bar .btn.on svg { position: relative; }
.off { opacity: .3; filter: grayscale(.65); }
main { display: flex; flex: none; height: 593px; }
.left { width: 261px; display: flex; flex-direction: column; }
header { display: flex; align-items: center; flex: none; height: 19px; padding: 0 2px 0 4px; color: #222; }
header i { margin: -1px 0 0 2px; }
header .float { margin-left: auto; }
header svg { width: 12px; height: 12px; }
header svg rect, header svg path { fill: none; stroke: #666; }
header svg .x { stroke-width: 2; stroke: #444; }
.dock { display: flex; flex-direction: column; }
.layers { height: 293px; }
.browser { height: 293px; }
.tools { display: flex; align-items: center; height: 31px; padding-left: 4px; }
.tools .it { display: flex; align-items: center; justify-content: center; }
.tools .btn { width: 25px; }
.tools .btn svg { width: 16px; height: 16px; }
.tools .arrow { width: 11px; }
.view { display: grid; grid-template: 227px 15px / 245px 15px; border: 1px solid #b4b4b4; border-right: 0; background: #fff; height: 243px; margin-top: auto; width: 261px; }
.rows { overflow: hidden; }
.row { display: flex; align-items: center; height: 19px; white-space: nowrap; }
.tri { flex: none; width: 0; border: 4px solid transparent; border-left: 5px solid #555; border-right: 0; }
.tri.none { border-color: transparent; }
.check { display: block; flex: none; width: 14px; height: 14px; border: 1px solid #b9b9b9; background: #fff; }
.check svg { width: 12px; height: 12px; }
.check path { fill: none; stroke: #000; stroke-width: 2.2; }
.ic { width: 15px; height: 15px; margin-top: -1px; }
.layers .tri { margin-left: 8px; margin-right: 10px; }
.layers .ic { margin: -1px 7px 0 6px; }
.layers .ic.group { width: 14px; height: 14px; margin-left: 7px; }
.layers .ic.poly { width: 16px; height: 16px; margin-right: 6px; }
.layers .ic.box { width: 16px; height: 16px; margin-right: 6px; }
.layers .ic.dash { width: 16px; margin-right: 4px; }
.dim { font-weight: bold; font-style: italic; color: #808080; }
.current { font-weight: bold; }
.current .label { text-decoration: underline; text-underline-offset: 2px; text-decoration-skip-ink: none; }
.browser .tri { margin-left: 54px; margin-right: 8px; }
.browser .ic { margin-right: 7px; }
.sel { background: #308cc6; color: #e9f3fa; }
.sel .tri { border-left-color: #173d55; }
.vs, .hs { display: flex; background: #e3e3e3; }
.vs { flex-direction: column; border-left: 1px solid #b4b4b4; border-right: 1px solid #b4b4b4; }
.hs { border-top: 1px solid #b4b4b4; }
.vs > i, .hs > i { display: flex; align-items: center; justify-content: center; background: #f7f7f7; flex: none; }
.vs > i { height: 13px; }
.hs > i { width: 13px; }
.vs .track { flex: 1; border: solid #b4b4b4; border-width: 1px 0; }
.hs .track { flex: 1; border: solid #b4b4b4; border-width: 0 1px; }
.thumb { background: linear-gradient(90deg, #fff, #f0f0f0); border: 0 solid #b4b4b4; }
.vs .thumb { height: 93px; border-bottom-width: 1px; }
.hs .thumb { height: 100%; width: 169px; border-right-width: 1px; background: linear-gradient(#fff, #f0f0f0); }
.browser .vs .thumb { height: 28px; margin-top: 139px; border-top-width: 1px; }
.browser .hs .thumb { width: 140px; }
.up::before, .down::before, .lt::before, .rt::before { content: ""; border: 4px solid transparent; }
.up::before { border-bottom-color: #555; border-top: 0; }
.down::before { border-top-color: #555; border-bottom: 0; }
.lt::before { border-right-color: #555; border-left: 0; border-right-width: 5px; }
.rt::before { border-left-color: #555; border-right: 0; border-left-width: 5px; }
.corner { background: #efefef; border: 1px solid #b4b4b4; border-bottom: 0; }
.split { display: flex; justify-content: center; align-items: center; gap: 2px; height: 7px; }
.split i, .gutter i { width: 1px; height: 1px; background: #aaa; }
.gutter { width: 6px; display: flex; flex-direction: column; align-items: center; justify-content: center; gap: 2px; padding-left: 3px; }
.right-g { padding-left: 0; }
.canvas { width: 930px; background: #fff; border: 1px solid #b4b4b4; }
.canvas svg { width: 929px; height: 591px; overflow: hidden; }
.right { width: 159px; display: flex; flex-direction: column; }
.right header { padding: 0 2px 0 4px; }
.right .tools { height: 30px; padding: 0 0 0 3px; }
.right .tools .sep { width: 8px; }
.right .tools .sep::before { content: ""; width: 1px; height: 12px; background: #ccc; }
.more { font-size: 17px; line-height: 16px; margin: -2px 0 0 2px; color: #444; }
.find, .locate { display: flex; align-items: center; background: #fff; border: 1px solid #adadad; border-radius: 2px; color: #868686; }
.find { height: 25px; margin-top: 1px; padding-left: 8px; gap: 7px; }
.find svg, .locate svg { width: 13px; height: 13px; }
.list { flex: 1; background: #fff; border: 1px solid #b4b4b4; }
.list .tri { margin: 0 10px 0 8px; }
.list .ic { width: 16px; height: 16px; margin-right: 6px; }
footer { display: flex; align-items: center; flex: none; height: 31px; font-size: 9px; }
footer span { white-space: nowrap; }
.locate { width: 221px; height: 25px; margin: -1px 363px 0 4px; padding-left: 8px; gap: 7px; font-size: 12px; }
.coord { width: 50px; }
.field { display: flex; align-items: center; height: 22px; padding-left: 5px; border: 1px solid #adadad; border-radius: 2px; background: #fff; }
.f1 { width: 71px; }
.f2 { width: 88px; height: 25px; padding-left: 3px; }
.f3, .f4 { width: 87px; height: 24px; }
.f3 { margin-right: 9px; }
.f4 { margin-right: 6px; }
em { display: flex; flex-direction: column; align-items: center; justify-content: center; gap: 5px; height: 100%; width: 14px; margin-left: auto; border-left: 1px solid #b4b4b4; background: #f6f6f6; }
.f2 em { width: 20px; }
em i { display: flex; }
.s-ic { width: 16px; height: 16px; }
.target { margin: -2px 13px 0 5px; }
.scale { width: 25px; }
.lock { width: 14px; margin: 0 8px 0 11px; }
.mag { width: 44px; }
.rot { width: 45px; }
.render { margin-left: 5px; width: 46px; }
.crs { margin-right: 2px; }
.epsg { width: 65px; }
.grip { width: 12px; height: 12px; margin-left: auto; margin-top: 14px; }
</style>
